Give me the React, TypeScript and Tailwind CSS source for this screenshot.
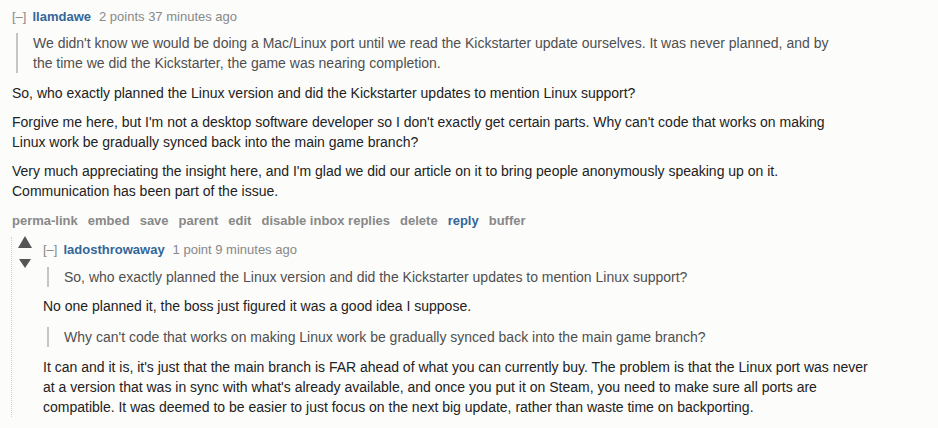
import React from "react";

const font = { fontFamily: '"Liberation Sans", Arial, sans-serif' };

function Quote({ children }: { children: React.ReactNode }) {
  return (
    <div className="border-l-2 border-[#c5c5c5] pl-[15px] text-[#4f4f4f] text-[14px] leading-[20px]">
      {children}
    </div>
  );
}

export default function App() {
  const btns = ["perma-link", "embed", "save", "parent", "edit", "disable inbox replies", "delete", "reply", "buffer"];
  return (
    <div className="w-[938px] h-[428px] overflow-hidden bg-[#fcfcfb] text-[#222]" style={font}>
      <div className="pl-[12px] pt-[9px]">
        <div className="flex items-baseline text-[13px] leading-[16px]">
          <span className="text-[#888]">[–]</span>
          <span className="ml-[6px] font-bold text-[#336699]">llamdawe</span>
          <span className="ml-[8px] text-[#888]">2 points 37 minutes ago</span>
        </div>
        <div className="mt-[8px] ml-[4px] w-[820px]">
          <Quote>
            We didn't know we would be doing a Mac/Linux port until we read the Kickstarter update ourselves. It was never planned, and by the time we did the Kickstarter, the game was nearing completion.
          </Quote>
        </div>
        <div className="w-[840px] text-[14px] leading-[20px]">
          <p className="mt-[10px]">So, who exactly planned the Linux version and did the Kickstarter updates to mention Linux support?</p>
          <p className="mt-[9px]">Forgive me here, but I'm not a desktop software developer so I don't exactly get certain parts. Why can't code that works on making Linux work be gradually synced back into the main game branch?</p>
          <p className="mt-[9px]">Very much appreciating the insight here, and I'm glad we did our article on it to bring people anonymously speaking up on it. Communication has been part of the issue.</p>
        </div>
        <div className="mt-[12px] flex gap-[10px] text-[13px] font-bold leading-[16px] text-[#888]">
          {btns.map((b) => (
            <span key={b} className={b === "reply" ? "text-[#336699]" : ""}>{b}</span>
          ))}
        </div>
      </div>
      <div className="ml-[11px] mt-[8px] border-l border-dotted border-[#cfcfcf] flex">
        <div className="w-[25px] flex flex-col items-center -mt-[1px]">
          <svg width="14" height="12" viewBox="0 0 14 12"><polygon points="7,0 14,12 0,12" fill="#555555" /></svg>
          <svg className="mt-[11px]" width="12" height="9" viewBox="0 0 12 9"><polygon points="0,0 12,0 6,9" fill="#555555" /></svg>
        </div>
        <div className="pt-[5px] pl-[6px]">
          <div className="flex items-baseline text-[13px] leading-[16px]">
            <span className="text-[#888]">[–]</span>
            <span className="ml-[6px] font-bold text-[#336699]">ladosthrowaway</span>
            <span className="ml-[8px] text-[#888]">1 point 9 minutes ago</span>
          </div>
          <div className="mt-[9px] ml-[4px]">
            <Quote>So, who exactly planned the Linux version and did the Kickstarter updates to mention Linux support?</Quote>
          </div>
          <div className="w-[840px] text-[14px] leading-[20px]">
            <p className="mt-[9px]">No one planned it, the boss just figured it was a good idea I suppose.</p>
          </div>
          <div className="mt-[11px] ml-[4px]">
            <Quote>Why can't code that works on making Linux work be gradually synced back into the main game branch?</Quote>
          </div>
          <div className="w-[840px] text-[14px] leading-[20px]">
            <p className="mt-[10px]">It can and it is, it's just that the main branch is FAR ahead of what you can currently buy. The problem is that the Linux port was never at a version that was in sync with what's already available, and once you put it on Steam, you need to make sure all ports are compatible. It was deemed to be easier to just focus on the next big update, rather than waste time on backporting.</p>
          </div>
        </div>
      </div>
    </div>
  );
}
